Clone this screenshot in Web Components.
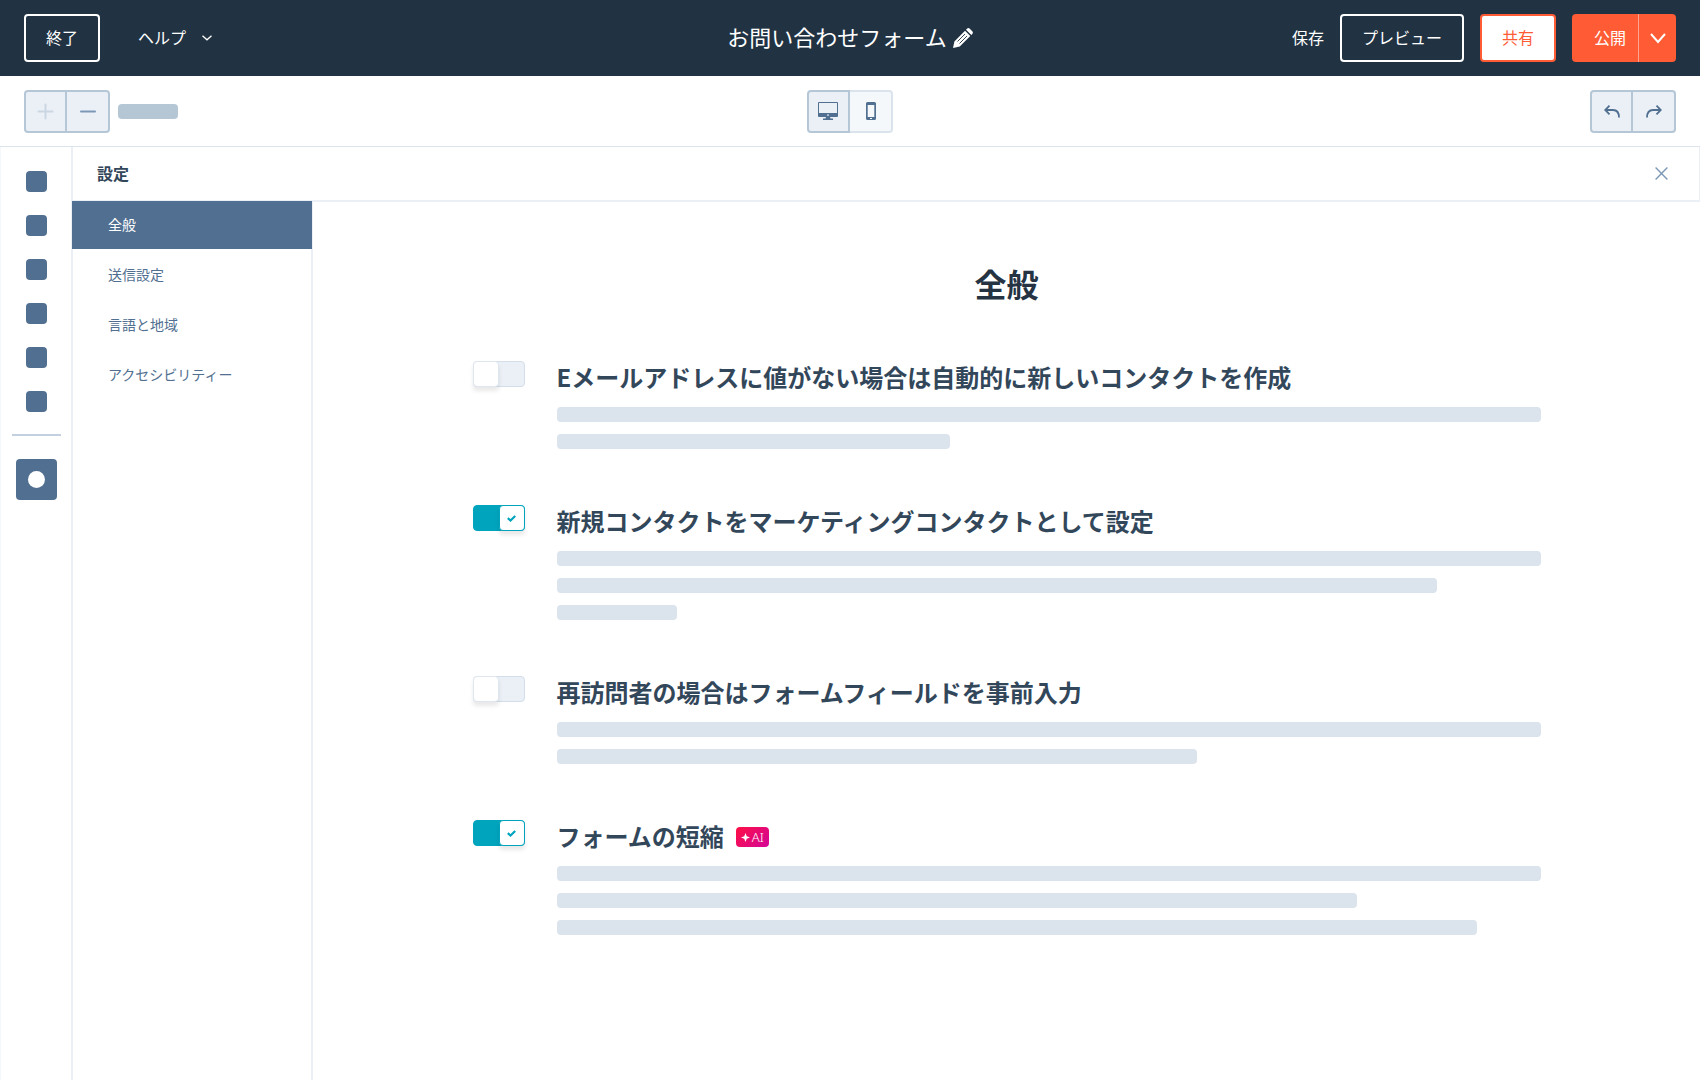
<!DOCTYPE html>
<html lang="ja">
<head>
<meta charset="utf-8">
<title>お問い合わせフォーム</title>
<style>
  html, body { margin: 0; height: 100%; }
  body { font-family: "Noto Sans CJK JP", sans-serif; color: #33475b; background: #fff; }
</style>
</head>
<body>
<form-editor></form-editor>
<script>
const define = (name, html, setup) => {
  const template = document.createElement('template');
  template.innerHTML = '<style>*{box-sizing:border-box}button{font:inherit;margin:0;cursor:pointer}svg{display:block}</style>' + html;
  customElements.define(name, class extends HTMLElement {
    constructor() {
      super();
      this.attachShadow({ mode: 'open' }).append(template.content.cloneNode(true));
    }
    connectedCallback() { if (setup) setup(this, this.shadowRoot); }
  });
};

define('bar-button', `
<style>
  :host { display: block; }
  button { height: 48px; padding: 0 20px 2px; border: 2px solid #fff; border-radius: 4px; background: transparent; color: #fff; font-size: 16px; line-height: 24px; white-space: nowrap; }
  :host([kind="share"]) button { background: #fff; color: #ff5c35; border-color: #ff5c35; }
  :host([kind="text"]) button { border: 0; padding: 0 0 2px; display: flex; align-items: center; gap: 16px; }
  ::slotted(svg) { margin-top: 2px; }
</style>
<button type="button"><slot></slot></button>`);

define('publish-button', `
<style>
  :host { display: flex; height: 48px; color: #fff; background: #ff5c35; border-radius: 4px; }
  button { border: 0; padding: 0; background: transparent; color: inherit; }
  .main { padding: 0 12px 2px 22px; font-size: 16px; line-height: 24px; }
  .more { width: 38px; border-left: 1px solid #ffa58f; display: flex; align-items: center; justify-content: center; }
</style>
<button class="main" type="button"><slot></slot></button>
<button class="more" type="button" aria-label="その他"><svg width="16" height="12" viewBox="0 0 16 12" fill="none" stroke="currentColor" stroke-width="2"><path d="M1 2l7 8 7-8"/></svg></button>`);

define('app-header', `
<style>
  :host { display: grid; grid-template-columns: 1fr auto 1fr; align-items: center; height: 76px; padding: 0 24px; background: #213343; color: #fff; box-sizing: border-box; }
  .left { display: flex; align-items: center; gap: 38px; }
  .right { display: flex; align-items: center; justify-content: flex-end; gap: 16px; }
  .title { display: flex; align-items: center; gap: 6px; }
  h1 { margin: 0; padding-bottom: 4px; font-size: 22px; line-height: 32px; font-weight: 400; }
  .edit { border: 0; padding: 0; background: none; color: #fff; }
</style>
<div class="left">
  <bar-button>終了</bar-button>
  <bar-button kind="text">ヘルプ<svg width="10" height="6" viewBox="0 0 10 6" fill="none" stroke="currentColor" stroke-width="1.300"><path d="M.5 .8L5 4.800 9.500 .8"/></svg></bar-button>
</div>
<div class="title"><h1>お問い合わせフォーム</h1>
  <button class="edit" type="button" aria-label="名前を編集"><svg width="20" height="20" viewBox="0 0 20 20">
    <path fill="#fff" d="M0 20l1.400-6.600L12 2.700l5.300 5.300L6.700 18.600zM13 1.700l1-1q1.300-1.200 2.800 0l2.500 2.500q1.200 1.400 0 2.800l-1 1z"/>
    <path fill="none" stroke="#213343" stroke-width=".9" d="M4.500 13.500l7.500-7.500M6.500 15.500l7.500-7.500"/>
    <path fill="none" stroke="#213343" stroke-width=".6" d="M12.300 2.200l5.500 5.500"/></svg></button>
</div>
<div class="right">
  <bar-button kind="text">保存</bar-button>
  <bar-button>プレビュー</bar-button>
  <bar-button kind="share">共有</bar-button>
  <publish-button>公開</publish-button>
</div>`);

define('tool-group', `
<style>
  :host { display: flex; height: 43px; color: #516f90; }
  button { width: 43px; padding: 0; display: flex; align-items: center; justify-content: center; background: #eaf0f6; border: 2px solid #b5c7d7; color: inherit; }
  .a { border-radius: 4px 0 0 4px; }
  .b { border-radius: 0 4px 4px 0; border-left: 0; padding-left: 1px; }
  :host([first-selected]) .b { background: #f5f8fa; border-color: #dbe4ed; }
  :host([first-disabled]) .a { color: #cbd6e2; }
  :host([first-disabled]) .b { color: #7c98b6; }
</style>
<button class="a" type="button"><slot name="first"></slot></button>
<button class="b" type="button"><slot name="second"></slot></button>`, (host, root) => {
  const [a, b] = host.getAttribute('labels').split(',');
  root.querySelector('.a').setAttribute('aria-label', a);
  root.querySelector('.b').setAttribute('aria-label', b);
  root.querySelector('.a').disabled = host.hasAttribute('first-disabled');
});

define('tool-bar', `
<style>
  :host { display: grid; grid-template-columns: 1fr auto 1fr; align-items: center; height: 71px; padding: 0 24px; border-bottom: 1px solid #dbe4ed; background: #fff; box-sizing: border-box; }
  .left { display: flex; align-items: center; gap: 8px; }
  .right { display: flex; justify-content: flex-end; }
  .chip { width: 60px; height: 15px; border-radius: 4px; background: #b5c7d5; }
</style>
<div class="left">
  <tool-group labels="追加,削除" first-disabled>
    <svg slot="first" width="17" height="17" viewBox="0 0 17 17" fill="none" stroke="currentColor" stroke-width="2" stroke-linecap="round"><path d="M8.500 1.500v14M1.500 8.500h14"/></svg>
    <svg slot="second" width="16" height="17" viewBox="0 0 16 17" fill="none" stroke="currentColor" stroke-width="2" stroke-linecap="round"><path d="M1 8.500h14"/></svg>
  </tool-group>
  <div class="chip"></div>
</div>
<tool-group labels="デスクトップ,モバイル" first-selected>
  <svg slot="first" width="21" height="19" viewBox="0 0 21 19" fill="currentColor"><path fill-rule="evenodd" d="M1 0h18q1 0 1 1v13q0 1-1 1H1q-1 0-1-1V1q0-1 1-1zM1 1v10h18V1zM10 12.200a.8.800 0 1 0 .01 0z"/><path d="M8 15h4l.5 1.500H15V18H5v-1.500h2.500z"/></svg>
  <svg slot="second" width="10" height="18" viewBox="0 0 10 18" fill="currentColor"><path fill-rule="evenodd" d="M1.500 0h7Q10 0 10 1.500v15q0 1.500-1.500 1.500h-7Q0 18 0 16.500v-15Q0 0 1.500 0zM1.700 3v12h6.600V3zM4 16v1h2v-1z"/></svg>
</tool-group>
<div class="right">
  <tool-group labels="元に戻す,やり直す">
    <svg slot="first" width="16" height="13" viewBox="0 0 16 13" fill="none" stroke="currentColor" stroke-width="1.800"><path d="M5.500 .7L1.200 5l4.300 4.300M1.200 5H9q6 0 6 7.500"/></svg>
    <svg slot="second" width="16" height="13" viewBox="0 0 16 13" fill="none" stroke="currentColor" stroke-width="1.800"><path d="M10.500 .7L14.800 5l-4.300 4.300M14.800 5H7q-6 0-6 7.500"/></svg>
  </tool-group>
</div>`);

define('side-rail', `
<style>
  :host { display: flex; flex-direction: column; align-items: center; gap: 22px; width: 73px; flex: none; padding: 24px 0 24px 1px; border-left: 1px solid #f5f8fa; border-right: 2px solid #eaf0f6; box-sizing: border-box; }
  .group { display: flex; flex-direction: column; gap: 23px; }
  button { border: 0; padding: 0; background: #516f90; border-radius: 4px; }
  .group button { width: 21px; height: 21px; }
  hr { width: 49px; height: 2px; margin: 0 0 1px; border: 0; background: #c3d0e0; }
  .current { width: 41px; height: 41px; display: grid; place-items: center; }
  .current span { width: 17px; height: 17px; border-radius: 50%; background: #fff; }
</style>
<div class="group"><button type="button"></button><button type="button"></button><button type="button"></button><button type="button"></button><button type="button"></button><button type="button"></button></div>
<hr>
<button class="current" type="button" aria-current="true"><span></span></button>`);

define('panel-header', `
<style>
  :host { display: flex; align-items: center; justify-content: space-between; height: 55px; padding: 0 31px 0 24px; border-bottom: 2px solid #eaf0f6; border-right: 1px solid #eaf0f6; box-sizing: border-box; }
  h2 { margin: 0; padding-bottom: 2px; font-size: 16px; line-height: 24px; font-weight: 700; color: #33475b; }
  button { border: 0; padding: 0; background: none; color: #7c98b6; }
</style>
<h2><slot></slot></h2>
<button type="button" aria-label="閉じる"><svg width="13" height="13" viewBox="0 0 13 13" fill="none" stroke="currentColor" stroke-width="1.400"><path d="M.6 .6l11.800 11.800M12.400 .6L.6 12.400"/></svg></button>`);

define('menu-item', `
<style>
  :host { display: block; }
  a { display: flex; align-items: center; height: 48px; padding: 0 0 2px 36px; font-size: 14px; line-height: 20px; color: #516f90; text-decoration: none; }
  :host([current]) a { background: #516f90; color: #fff; }
</style>
<a href="#"><slot></slot></a>`);

define('settings-menu', `
<style>
  :host { display: block; width: 240px; flex: none; box-sizing: border-box; border-right: 2px solid #eaf0f6; }
  nav { display: flex; flex-direction: column; gap: 2px; margin: -1px -1px 0; }
</style>
<nav><slot></slot></nav>`);

define('ai-badge', `
<style>
  :host { display: inline-flex; align-items: center; justify-content: center; gap: 2px; width: 33px; height: 20px; border-radius: 4px; background: linear-gradient(135deg, #ff0f45, #d20698); color: #fff; font: 300 13px/20px "Noto Sans", sans-serif; }
</style>
<svg width="9" height="9" viewBox="0 0 8 8" fill="currentColor"><path d="M4 0l1.100 2.900L8 4 5.100 5.100 4 8 2.900 5.100 0 4l2.900-1.100z"/></svg><span>AI</span>`);

define('setting-row', `
<style>
  :host { display: flex; align-items: flex-start; gap: 32px; }
  .switch { position: relative; flex: none; width: 52px; height: 26px; }
  input { appearance: none; display: block; width: 100%; height: 100%; margin: 0; border: 1px solid #d3deea; border-radius: 4px; background: #eaf0f6; cursor: pointer; }
  .knob { position: absolute; top: 0; left: 0; width: 26px; height: 26px; border: 1px solid #dfe6ef; border-radius: 4px; background: #fff; box-shadow: 0 4px 4px rgba(0,0,0,.09); pointer-events: none; display: grid; place-items: center; }
  .knob svg { display: none; }
  input:checked { background: #00a4bd; border-color: #00a4bd; }
  input:checked + .knob { left: auto; right: 0; border-color: #00a4bd; }
  input:checked + .knob svg { display: block; }
  .body { flex: 1; min-width: 0; display: flex; flex-direction: column; gap: 14px; }
  .head { display: flex; align-items: center; gap: 12px; height: 32px; }
  ::slotted([slot="badge"]) { margin-top: 2px; }
  label { font-size: 24px; line-height: 36px; font-weight: 700; white-space: nowrap; color: #33475b; }
  .lines { display: flex; flex-direction: column; gap: 12px; }
  .lines div { height: 15px; max-width: 100%; border-radius: 4px; background: #dbe3ec; }
</style>
<div class="switch"><input type="checkbox" role="switch" id="toggle"><span class="knob"><svg width="9" height="7" viewBox="0 0 9 7" fill="none" stroke="#00a4bd" stroke-width="2.200"><path d="M.8 3.200L3.500 5.500 8.200 1"/></svg></span></div>
<div class="body">
  <div class="head"><label for="toggle"><slot></slot></label><slot name="badge"></slot></div>
  <div class="lines"></div>
</div>`, (host, root) => {
  root.querySelector('input').checked = host.hasAttribute('on');
  root.querySelector('.lines').replaceChildren(...host.getAttribute('lines').split(' ').map(w => {
    const d = document.createElement('div');
    d.style.width = w;
    return d;
  }));
});

define('settings-page', `
<style>
  :host { display: block; flex: 1; min-width: 0; padding: 59px 24px; box-sizing: border-box; }
  main { max-width: 1068px; margin: 0 auto; display: flex; flex-direction: column; gap: 56px; }
  h2 { margin: 0; font-size: 32px; line-height: 44px; font-weight: 700; text-align: center; color: #253342; }
</style>
<main>
  <h2>全般</h2>
  <setting-row lines="100% 393px">Eメールアドレスに値がない場合は自動的に新しいコンタクトを作成</setting-row>
  <setting-row on lines="100% 880px 120px">新規コンタクトをマーケティングコンタクトとして設定</setting-row>
  <setting-row lines="100% 640px">再訪問者の場合はフォームフィールドを事前入力</setting-row>
  <setting-row on lines="100% 800px 920px">フォームの短縮<ai-badge slot="badge"></ai-badge></setting-row>
</main>`);

define('form-editor', `
<style>
  :host { display: flex; flex-direction: column; min-height: 100vh; }
  .work { flex: 1; display: flex; }
  .panel { flex: 1; min-width: 0; display: flex; flex-direction: column; }
  .columns { flex: 1; display: flex; }
</style>
<app-header></app-header>
<tool-bar></tool-bar>
<div class="work">
  <side-rail></side-rail>
  <div class="panel">
    <panel-header>設定</panel-header>
    <div class="columns">
      <settings-menu>
        <menu-item current>全般</menu-item>
        <menu-item>送信設定</menu-item>
        <menu-item>言語と地域</menu-item>
        <menu-item>アクセシビリティー</menu-item>
      </settings-menu>
      <settings-page></settings-page>
    </div>
  </div>
</div>`);
</script>
</body>
</html>
